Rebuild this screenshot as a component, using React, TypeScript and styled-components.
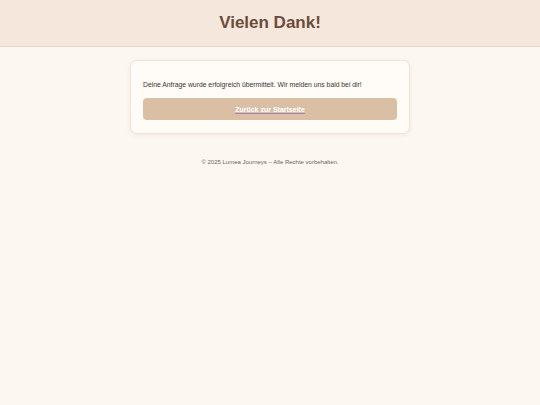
import styled, { createGlobalStyle } from 'styled-components';

const GlobalStyle = createGlobalStyle`
  html, body {
    margin: 0;
    padding: 0;
    background: #fdf7f1;
    font-family: 'Liberation Sans', Arial, sans-serif;
  }
`;

const App = () => {
  return (
    <Page>
      <GlobalStyle />
      <Header>
        <Title>Vielen Dank!</Title>
      </Header>
      <Main>
        <Card>
          <Message>
            Deine Anfrage wurde erfolgreich übermittelt. Wir melden uns bald bei dir!
          </Message>
          <BackButton href="#">Zurück zur Startseite</BackButton>
        </Card>
      </Main>
      <Footer>© 2025 Lumea Journeys – Alle Rechte vorbehalten.</Footer>
    </Page>
  );
};

export default App;

const Page = styled.div`
  min-height: 405px;
  background: #fdf7f1;
`;

const Header = styled.header`
  height: 46px;
  display: flex;
  align-items: center;
  justify-content: center;
  background: #f6e7dc;
  border-bottom: 1px solid #e6d3c4;
`;

const Title = styled.h1`
  margin: 0;
  font-size: 17px;
  font-weight: bold;
  color: #6b4c3b;
`;

const Main = styled.main`
  display: flex;
  justify-content: center;
  padding-top: 13px;
`;

const Card = styled.div`
  width: 280px;
  box-sizing: border-box;
  padding: 19px 12px 13px;
  background: #fffcf8;
  border: 1px solid #f1e3d8;
  border-radius: 7px;
  box-shadow: 0 1px 4px rgba(150, 110, 80, 0.12);
`;

const Message = styled.p`
  margin: 0 0 8px;
  font-size: 6.8px;
  line-height: 10px;
  color: #3d3330;
`;

const BackButton = styled.a`
  display: flex;
  align-items: center;
  justify-content: center;
  height: 22px;
  border-radius: 4px;
  background: #dbbfa5;
  color: #ffffff;
  font-size: 7px;
  font-weight: bold;
  text-decoration: underline;
  text-decoration-color: #9a86b8;
`;

const Footer = styled.footer`
  margin-top: 25px;
  text-align: center;
  font-size: 6px;
  color: #6f6560;
`;
